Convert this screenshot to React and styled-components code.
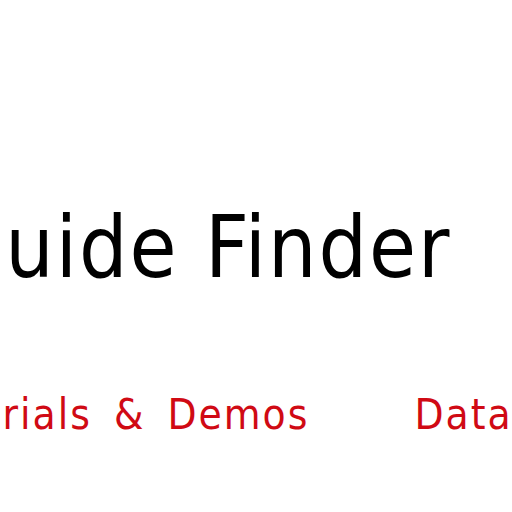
import React from "react";
import styled, { createGlobalStyle } from "styled-components";

const Global = createGlobalStyle`
  html, body { margin: 0; padding: 0; background: #ffffff; }
  body { width: 512px; height: 512px; overflow: hidden; }
`;

const Page = styled.div`
  width: 512px;
  height: 512px;
  overflow: hidden;
  display: flex;
  flex-direction: column;
  font-family: "DejaVu Sans Condensed", "DejaVu Sans", Verdana, sans-serif;
`;

const Title = styled.h1`
  margin: 198px 0 0 -56px;
  font-weight: normal;
  font-size: 85px;
  line-height: 100px;
  letter-spacing: 2px;
  color: #000000;
  white-space: nowrap;
`;

const Nav = styled.nav`
  display: flex;
  gap: 105px;
  margin: 92px 0 0 -84px;
  white-space: nowrap;
`;

const NavLink = styled.a`
  font-size: 42px;
  line-height: 50px;
  letter-spacing: 2px;
  word-spacing: 8px;
  color: #d00a14;
  text-decoration: none;
`;

export default function App() {
  return (
    <Page>
      <Global />
      <Title>Guide Finder</Title>
      <Nav>
        <NavLink href="#">Tutorials &amp; Demos</NavLink>
        <NavLink href="#">Data</NavLink>
      </Nav>
    </Page>
  );
}
